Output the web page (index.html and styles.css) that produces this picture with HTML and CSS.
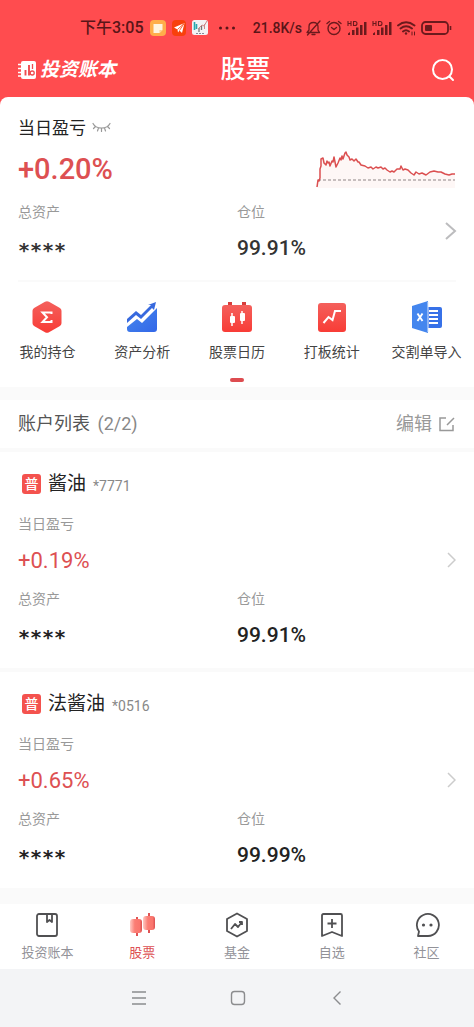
FILE: index.html
```html
<!DOCTYPE html>
<html lang="zh-CN">
<head>
<meta charset="utf-8">
<meta name="viewport" content="width=device-width, initial-scale=1">
<title>股票 - 投资账本</title>
<link rel="stylesheet" href="styles.css">
</head>
<body>
<header class="top">
  <div class="status">
    <span class="clock">下午3:05</span>
    <div class="apps">
      <svg width="16" height="16" viewBox="0 0 16 16"><rect width="16" height="16" rx="4" fill="#ffae4a"/><path d="M3.500 4h9v6l-3 3h-6z" fill="#fff4df"/><path d="M12.500 10l-3 3v-3z" fill="#ffd08a"/></svg>
      <svg width="16" height="16" viewBox="0 0 16 16"><rect x="1" width="14" height="16" rx="4" fill="#f8400c"/><path d="M3 7.500L13.500 3 11 13 8.500 10.500 7 12.500 6.500 9.500z" fill="#fff"/><path d="M13 3.500L6.500 9.500M13 3.500L8.500 10.500" stroke="#f8400c" stroke-width=".8"/></svg>
      <svg width="16" height="16" viewBox="0 0 16 16"><rect width="16" height="15" rx="2.500" fill="#f3f3f5"/><path d="M2.500 2v8M4.500 4v5" stroke="#29a9ae" stroke-width="1.600"/><path d="M7 8v4M9.500 6v4" stroke="#777" stroke-width="1.300"/><path d="M6 9l4-4 2 1 3-5M12.500 4v5" fill="none" stroke="#c88" stroke-width="1"/><path d="M4 13.500h9" stroke="#889" stroke-dasharray="2 1"/></svg>
    </div>
    <svg class="dots" width="18" height="4" viewBox="0 0 18 4" fill="#5a1518"><circle cx="2.500" cy="2" r="1.500"/><circle cx="9" cy="2" r="1.500"/><circle cx="15.500" cy="2" r="1.500"/></svg>
    <span class="speed">21.8K/s</span>
    <div class="signals">
      <svg width="15" height="16" viewBox="0 0 15 16" fill="none" stroke="#6b1a1d" stroke-width="1.300" stroke-linecap="round" stroke-linejoin="round"><path d="M1 12.500h12.500L12 10V6.500C12 4 10 2.500 7.500 2.500S3 4 3 6.500V10zM6 14.500h3M14 1L1.500 15"/></svg>
      <svg width="16" height="16" viewBox="0 0 16 16" fill="none" stroke="#6b1a1d" stroke-width="1.400" stroke-linecap="round" stroke-linejoin="round"><circle cx="8" cy="8.500" r="6"/><path d="M5.500 7.500L8 9.500l2.500-2M1 3.500L3.500 1.500M15 3.500L12.500 1.500"/></svg>
      <svg width="20" height="16" viewBox="0 0 20 16"><g fill="none" stroke="#6b1a1d" stroke-width="1.100"><path d="M1 1v5M4 1v5M1 3.500h3M6.500 1.500h1.500q2 0 2 2t-2 2h-1.500z"/></g><path d="M1 15v-1.500L3 12v3zM5 10h2.500v5H5zM9 7.500h2.500V15H9zM13 5h2.500v10H13zM17 2h2.500v13H17z" fill="#6b1a1d"/></svg>
      <svg width="20" height="16" viewBox="0 0 20 16"><g fill="none" stroke="#6b1a1d" stroke-width="1.100"><path d="M1 1v5M4 1v5M1 3.500h3M6.500 1.500h1.500q2 0 2 2t-2 2h-1.500z"/></g><path d="M1 15v-1.500L3 12v3zM5 10h2.500v5H5zM9 7.500h2.500V15H9zM13 5h2.500v10H13zM17 2h2.500v13H17z" fill="#6b1a1d"/></svg>
      <svg width="19" height="16" viewBox="0 0 19 16" fill="none" stroke="#6b1a1d" stroke-width="1.900" stroke-linecap="round"><path d="M1 5.500Q9 -1 17.500 5.500M3.500 8.500Q9 4 15 8.500M6 11.500q3-2.500 6 0"/><circle cx="9" cy="13.500" r="1.200" fill="#6b1a1d" stroke="none"/><path d="M15 12v3M17.500 12v3" stroke-width="1"/></svg>
      <svg width="31" height="14" viewBox="0 0 31 14"><rect x="1" y="1" width="26" height="12" rx="3.500" fill="none" stroke="#6b1a1d" stroke-width="1.800"/><rect x="4" y="4" width="7" height="6" rx="1" fill="#6b1a1d"/><path d="M29.500 5v4" stroke="#6b1a1d" stroke-width="1.600"/></svg>
    </div>
  </div>
  <div class="titlebar">
    <div class="brand">
      <svg width="19" height="20" viewBox="0 0 19 20"><path d="M5 1h11q2 0 2 2v14q0 2-2 2H5q-2 0-2-2V3q0-2 2-2z" fill="#fff"/><path d="M0 4.500h4M0 8.500h4M0 12.500h4M0 16h4" stroke="#fff" stroke-width="1.700"/><path d="M7.500 10v5.500M11 5v10.500" stroke="#f04c50" stroke-width="1.900"/><path d="M14.500 4v5" stroke="#f04c50" stroke-width="1.300"/><circle cx="14.200" cy="13" r="2" fill="#fff" stroke="#f04c50" stroke-width="1.300"/></svg>
      <span>投资账本</span>
    </div>
    <h1>股票</h1>
    <button class="search" aria-label="搜索"><svg width="24" height="24" viewBox="0 0 24 24" fill="none" stroke="#fff" stroke-width="2" stroke-linecap="round"><circle cx="11.500" cy="11.500" r="9.500"/><path d="M18.500 18.500l3.500 3.500"/></svg></button>
  </div>
</header>

<main>
  <section class="summary">
    <div class="overview">
      <div class="today">
        <div>
          <div class="heading"><h2>当日盈亏</h2>
            <button class="eye" aria-label="显示金额"><svg width="19" height="12" viewBox="0 0 19 12" fill="none" stroke="#999" stroke-width="1.200" stroke-linecap="round"><path d="M1 1.500C4 7.500 15 7.500 18 1.500M3.500 4.500L1.500 6.500M6.500 6l-1 3M9.500 6.500v3M12.500 6l1 3M15.500 4.500l2 2"/></svg></button>
          </div>
          <div class="gain-big">+0.20%</div>
        </div>
        <svg class="chart" width="140" height="40" viewBox="0 0 140 40"><path d="M1 38L3 30 5 10 7 8 10 14 14 15 18 8 20 17 25 7 30 3 34 9 42 11 47 16 54 19 67 19 74 23 84 19 92 21 97 25 110 26 118 22 132 25 139 25V39H1z" fill="#fef7f6"/><path d="M2 31h137" stroke="#8f8585" stroke-width="1" stroke-dasharray="3 2"/><path d="M1 38L2 31 3 32 4 29 4 20 5 17 5 10 7 9 8 14 10 16 11 12 12 14 13 13 14 17 16 12 17 13 18 8 19 13 20 18 22 14 24 9 25 11 26 7 27 10 29 4 30 3 31 6 33 8 34 11 36 10 38 12 40 10 42 13 43 13 45 16 49 17 52 19 55 18 57 20 60 18 62 19 65 18 67 20 69 19 71 21 74 23 76 22 78 23 81 20 84 20 85 17 87 21 89 20 92 21 95 24 98 26 100 23 103 25 106 24 110 26 114 23 118 22 122 23 125 23 129 25 133 26 136 25 139 25" fill="none" stroke="#db4f50" stroke-width="1.500" stroke-linejoin="round"/></svg>
      </div>
      <div class="stats">
        <dl><dt>总资产</dt><dd class="masked">****</dd></dl>
        <dl><dt>仓位</dt><dd>99.91%</dd></dl>
        <button class="more" aria-label="详情"><svg width="12" height="18" viewBox="0 0 12 18" fill="none" stroke="#bcbcbe" stroke-width="2"><path d="M1 1l9 8-9 8"/></svg></button>
      </div>
    </div>
    <nav class="actions">
      <button><svg width="32" height="32" viewBox="0 0 32 32"><defs><linearGradient id="red" x1="0" y1="0" x2="0" y2="1"><stop offset="0" stop-color="#f4605c"/><stop offset="1" stop-color="#f83c36"/></linearGradient><linearGradient id="blue" x1="0" y1="0" x2="1" y2="1"><stop offset="0" stop-color="#4788ed"/><stop offset="1" stop-color="#3267e8"/></linearGradient></defs><path d="M14 .8q2-1 4 0l10.500 6q2 1 2 3v12.400q0 2-2 3l-10.500 6q-2 1-4 0l-10.500-6q-2-1-2-3V9.800q0-2 2-3z" fill="url(#red)"/><path d="M20.500 13v-1.500h-9l4.500 4.700-4.500 4.800h9v-2" fill="none" stroke="#fff" stroke-width="2"/></svg>我的持仓</button>
      <button><svg width="32" height="32" viewBox="0 0 32 32"><path d="M1 18L10 10l5 4L25 4h-3l8-3-2 8-2-2-11 11-5-4L1 22z" fill="#3769de"/><path d="M1 26l10-8 5 4L31 7v21q0 3-3 3H4q-3 0-3-3z" fill="url(#blue)"/></svg>资产分析</button>
      <button><svg width="32" height="32" viewBox="0 0 32 32"><path d="M7 1h4v5H7zM21 1h4v5h-4z" fill="#d83e3c"/><rect x="1" y="4" width="30" height="27" rx="3" fill="url(#red)"/><path d="M11 12v13M21 10v13" stroke="#fff" stroke-width="1.500"/><rect x="9" y="15" width="5" height="7" rx="1" fill="#fff"/><rect x="19" y="12" width="5" height="8" rx="1" fill="#fff"/></svg>股票日历</button>
      <button><svg width="32" height="32" viewBox="0 0 32 32"><rect x="2" y="2" width="28" height="29" rx="3" fill="url(#red)"/><path d="M7.500 22l5-6 4 3 2.500-9h6" fill="none" stroke="#fff" stroke-width="2"/></svg>打板统计</button>
      <button><svg width="32" height="32" viewBox="0 0 32 32"><rect x="14" y="6" width="17" height="21" rx="2" fill="#3771e8"/><path d="M18 10h9M18 14h9M18 18h9M18 22h9" stroke="#fff" stroke-width="2"/><path d="M1 5L17 0v32L1 27z" fill="#4486ee"/><path d="M17 1v30" stroke="#dce8fc" stroke-width="1"/><path d="M6.500 12.500l5 7.500M11.500 12.500l-5 7.500" stroke="#fff" stroke-width="1.900"/></svg>交割单导入</button>
    </nav>
    <div class="pager"></div>
  </section>

  <div class="list-head">
    <h2>账户列表 <span>(2/2)</span></h2>
    <button class="edit">编辑 <svg width="16" height="16" viewBox="0 0 16 16" fill="none" stroke="#999" stroke-width="1.500"><path d="M7 2H1v12.500h13V9M8 9l7-7"/></svg></button>
  </div>

  <section class="account">
    <div class="name"><span class="tag">普</span><h3>酱油</h3><span class="code">*7771</span></div>
    <div class="daily">
      <dl><dt>当日盈亏</dt><dd class="gain">+0.19%</dd></dl>
      <button class="more" aria-label="酱油详情"><svg width="9" height="16" viewBox="0 0 9 16" fill="none" stroke="#ccc" stroke-width="1.500"><path d="M1 1l7 7-7 7"/></svg></button>
    </div>
    <div class="stats">
      <dl><dt>总资产</dt><dd class="masked">****</dd></dl>
      <dl><dt>仓位</dt><dd>99.91%</dd></dl>
    </div>
  </section>

  <section class="account">
    <div class="name"><span class="tag">普</span><h3>法酱油</h3><span class="code">*0516</span></div>
    <div class="daily">
      <dl><dt>当日盈亏</dt><dd class="gain">+0.65%</dd></dl>
      <button class="more" aria-label="法酱油详情"><svg width="9" height="16" viewBox="0 0 9 16" fill="none" stroke="#ccc" stroke-width="1.500"><path d="M1 1l7 7-7 7"/></svg></button>
    </div>
    <div class="stats">
      <dl><dt>总资产</dt><dd class="masked">****</dd></dl>
      <dl><dt>仓位</dt><dd>99.99%</dd></dl>
    </div>
  </section>
</main>

<footer>
  <nav class="tabs">
    <a href="#book"><svg width="26" height="26" viewBox="0 0 26 26" fill="none" stroke="#505052" stroke-width="1.800" stroke-linejoin="round"><rect x="3" y="2" width="20" height="22" rx="2"/><path d="M13 2v8l2.500-2 2.500 2V2"/></svg>投资账本</a>
    <a href="#stock" class="on"><svg width="26" height="26" viewBox="0 0 26 26"><defs><linearGradient id="lamp"><stop offset="0" stop-color="#ffc9c3"/><stop offset=".4" stop-color="#fb7d74"/><stop offset=".8" stop-color="#fa756d"/><stop offset="1" stop-color="#d94f50"/></linearGradient></defs><path d="M8 5v19M20 1v20" stroke="#df5354" stroke-width="2"/><rect x="1" y="7" width="12" height="14" rx="3" fill="url(#lamp)"/><rect x="14" y="4" width="12" height="14" rx="3" fill="url(#lamp)"/></svg>股票</a>
    <a href="#fund"><svg width="26" height="26" viewBox="0 0 26 26" fill="none" stroke="#505052" stroke-width="1.800" stroke-linejoin="round"><path d="M13 1.500L23 7v12l-10 5.500L3 19V7z"/><path d="M7 17l4-5 3 3 4-5M15 10h3v3"/></svg>基金</a>
    <a href="#watch"><svg width="26" height="26" viewBox="0 0 26 26" fill="none" stroke="#505052" stroke-width="1.800" stroke-linejoin="round"><path d="M3 3.500Q3 2 4.500 2h17Q23 2 23 3.500V24l-10-4-10 4zM13 7v9M8.500 11.500h9"/></svg>自选</a>
    <a href="#community"><svg width="26" height="26" viewBox="0 0 26 26" fill="none" stroke="#505052" stroke-width="1.800" stroke-linejoin="round"><path d="M4 24l1-4.500A11 11 0 1 1 14 24z"/><circle cx="9.500" cy="13" r="1.600" fill="#505052" stroke="none"/><circle cx="17" cy="13" r="1.600" fill="#505052" stroke="none"/></svg>社区</a>
  </nav>
  <div class="system">
    <button aria-label="菜单"><svg width="16" height="16" viewBox="0 0 16 16" stroke="#8b8c8e" stroke-width="1.400"><path d="M1 2h14M1 8h14M1 14h14"/></svg></button>
    <button aria-label="主页"><svg width="16" height="16" viewBox="0 0 16 16" fill="none" stroke="#8b8c8e" stroke-width="1.400"><rect x="1.500" y="1.500" width="13" height="13" rx="3"/></svg></button>
    <button aria-label="返回"><svg width="16" height="16" viewBox="0 0 16 16" fill="none" stroke="#8b8c8e" stroke-width="1.400"><path d="M11.500 1.500L5 8l6.500 6.500"/></svg></button>
  </div>
</footer>
</body>
</html>
```
FILE: styles.css
```css
* { box-sizing: border-box; }

body {
  margin: 0;
  min-height: 100vh;
  display: flex;
  flex-direction: column;
  background: #fafafa;
  color: #333;
  font-family: Roboto, "Noto Sans CJK SC", sans-serif;
}

h1, h2, h3, dl, dd { margin: 0; font-weight: 400; }
button { padding: 0; border: 0; background: none; font: inherit; color: inherit; }
svg { display: block; flex: none; }

.top { background: #ff4c4f; padding: 16px 0 13px; margin-bottom: -8px; }

.status {
  display: flex;
  align-items: center;
  height: 24px;
  padding: 0 22px 0 80px;
  color: #5a1518;
}
.clock { font-size: 16px; font-weight: 500; line-height: 24px; }
.apps { display: flex; gap: 5px; margin-left: 6px; }
.dots { margin-left: 10px; }
.speed { margin-left: auto; font-size: 14px; font-weight: 500; }
.signals { display: flex; align-items: center; gap: 5px; margin-left: 4px; }

.titlebar {
  display: grid;
  grid-template-columns: 1fr auto 1fr;
  align-items: center;
  height: 44px;
  margin-top: 8px;
  padding: 0 19px 0 18px;
  color: #fff;
}
.titlebar h1 { padding-left: 18px; font-size: 25px; line-height: 40px; font-weight: 500; }
.brand { display: flex; align-items: center; gap: 3px; font-size: 19px; font-weight: 700; font-style: italic; line-height: 24px; }
.search { justify-self: end; }

main { flex: 1; }
.summary { background: #fff; border-radius: 8px 8px 0 0; padding-bottom: 5px; }
.overview { margin: 0 18px; padding: 19px 0 20px; border-bottom: 2px solid #fafafa; }
.today { display: flex; justify-content: space-between; align-items: flex-end; }
.heading { display: flex; align-items: center; gap: 6px; }
.heading h2 { font-size: 17px; line-height: 24px; color: #222; }
.gain-big { margin-top: 9px; font-size: 29px; line-height: 40px; font-weight: 500; color: #dd5052; }

.stats { position: relative; display: grid; grid-template-columns: 1fr 1fr; }
dt { font-size: 14px; line-height: 20px; color: #999; }
dd { margin-top: 14px; font-size: 21px; line-height: 24px; font-weight: 500; }
.summary .stats { margin-top: 13px; }
.masked { font-family: "DejaVu Sans Mono", monospace; font-size: 20px; font-weight: 700; padding-top: 4px; line-height: 20px; }
.gain { font-size: 22px; color: #dd5052; font-weight: 400; }
.summary .more { position: absolute; right: -1px; top: 20px; }

.actions, .tabs { display: grid; grid-template-columns: repeat(5, 1fr); }
.actions { padding-top: 19px; }
.actions button { display: flex; flex-direction: column; align-items: center; gap: 9px; font-size: 14px; line-height: 20px; white-space: nowrap; color: #444; }
.pager { width: 14px; height: 4px; margin: 16px auto 0; border-radius: 2px; background: #dd4c50; }

.list-head {
  display: flex;
  justify-content: space-between;
  align-items: center;
  height: 48px;
  margin: 13px 0 4px;
  padding: 0 19px 0 18px;
  background: #fff;
}
.list-head h2 { font-size: 18px; line-height: 24px; color: #555; }
.list-head span { color: #888; margin-left: 3px; }
.edit { display: flex; align-items: center; gap: 7px; font-size: 18px; line-height: 24px; color: #999; }

.account { background: #fff; margin-bottom: 4px; padding: 16px 18px 21px; }
.name { display: flex; align-items: center; height: 32px; margin-bottom: 14px; padding-left: 4px; }
.name h3 { margin-left: 7px; font-size: 19px; line-height: 28px; color: #222; }
.tag { width: 19px; height: 20px; border-radius: 3px; background: #f4524e; color: #fff; font-size: 14px; font-weight: 500; line-height: 20px; text-align: center; }
.code { margin-left: 7px; padding-top: 3px; font-size: 14px; line-height: 20px; color: #888; }
.daily { display: flex; justify-content: space-between; align-items: flex-end; margin-bottom: 14px; }
.daily .more { padding-bottom: 7px; }
.account dd { color: #222; }
.account .gain { color: #dd5052; line-height: 28px; margin-top: 13px; }

.tabs { background: #fff; padding: 8px 0 4px; }
.tabs a { display: flex; flex-direction: column; align-items: center; gap: 5px; padding-bottom: 2px; font-size: 13px; line-height: 20px; color: #929298; text-decoration: none; }
.tabs .on { color: #dd5052; }
.system { display: flex; justify-content: center; align-items: center; gap: 83px; height: 58px; padding-left: 2px; background: #f3f4f6; }
```
